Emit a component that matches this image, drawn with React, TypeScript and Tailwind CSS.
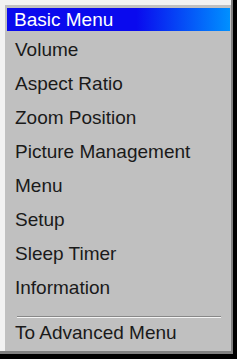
export default function App() {
  const items = [
    'Volume',
    'Aspect Ratio',
    'Zoom Position',
    'Picture Management',
    'Menu',
    'Setup',
    'Sleep Timer',
    'Information',
  ];

  return (
    <div
      className="w-[237px] h-[359px] bg-black pr-[4px] pb-[5px]"
      style={{ fontFamily: '"Liberation Sans", Arial, sans-serif' }}
    >
      <div className="w-full h-full bg-[#808080] pr-[2px] pb-[3px]">
        <div className="w-full h-full bg-[#c0c0c0] border-l-[5px] border-t-[5px] border-[#f2f2f2] pl-[2px] pt-[3px] pr-[1px]">
          {/* Title bar */}
          <div className="h-[23px] bg-[linear-gradient(to_right,#0a0aee_0%,#0a0aee_58%,#0090ff_100%)] pl-[7px] text-[19px] leading-[23px] text-white">
            Basic Menu
          </div>

          {/* Menu items */}
          <div className="pt-[2px]">
            {items.map((item) => (
              <div key={item} className="h-[34px] pl-[8px] text-[19px] leading-[34px] text-[#1a1a1a]">
                {item}
              </div>
            ))}
          </div>

          {/* Separator */}
          <div className="mt-[11px] ml-[10px] mr-[9px] border-t border-b border-t-[#888888] border-b-[#f4f4f4]" />

          <div className="mt-[3px] h-[24px] pl-[8px] text-[19px] leading-[24px] text-[#1a1a1a]">
            To Advanced Menu
          </div>
        </div>
      </div>
    </div>
  );
}
